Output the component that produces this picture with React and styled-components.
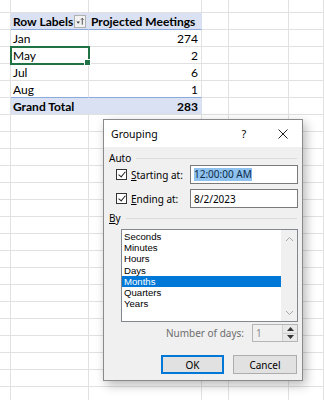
import React from "react";
import styled, { createGlobalStyle } from "styled-components";

const GlobalStyle = createGlobalStyle`
  html, body {
    margin: 0;
    padding: 0;
    background: #ffffff;
  }
  #root {
    width: 324px;
    height: 400px;
    overflow: hidden;
  }
`;

const COLS = "11px 78px 113px 27px 60px 1fr";
const GRID = "#e1e1e1";
const PIVOT = "#d9e1f2";
const PIVOT_LINE = "#8ea9db";

const rows = [
  { label: "Jan", value: "274" },
  { label: "May", value: "2", selected: true },
  { label: "Jul", value: "6" },
  { label: "Aug", value: "1" },
];

const listItems = ["Seconds", "Minutes", "Hours", "Days", "Months", "Quarters", "Years"];

const App = () => {
  const emptyRows = Array.from({ length: 17 });
  return (
    <>
      <GlobalStyle />
      <Page>
        <Sheet>
          <SheetRow $height={13}>
            <Cell /><Cell /><Cell /><Cell /><Cell /><Cell />
          </SheetRow>
          <SheetRow $height={17}>
            <Cell />
            <Cell $fill={PIVOT} $bottom={PIVOT_LINE} $bold>
              Row Labels
              <FilterButton>
                <svg width="11" height="11" viewBox="0 0 11 11">
                  <path d="M1.5 5.5 L5.5 5.5 L3.5 8 Z" fill="#444" />
                  <path d="M8 9 L8 2 M6.5 3.5 L8 2 L9.5 3.5" stroke="#444" strokeWidth="1" fill="none" />
                </svg>
              </FilterButton>
            </Cell>
            <Cell $fill={PIVOT} $bottom={PIVOT_LINE} $bold>Projected Meetings</Cell>
            <Cell /><Cell /><Cell />
          </SheetRow>
          {rows.map((r) => (
            <SheetRow key={r.label} $height={17}>
              <Cell />
              <Cell $selected={r.selected}>
                {r.label}
                {r.selected && <FillHandle />}
              </Cell>
              <Cell $right>{r.value}</Cell>
              <Cell /><Cell /><Cell />
            </SheetRow>
          ))}
          <SheetRow $height={17}>
            <Cell />
            <Cell $fill={PIVOT} $top={PIVOT_LINE} $bold>Grand Total</Cell>
            <Cell $fill={PIVOT} $top={PIVOT_LINE} $bold $right>283</Cell>
            <Cell /><Cell /><Cell />
          </SheetRow>
          {emptyRows.map((_, i) => (
            <SheetRow key={i} $height={17}>
              <Cell /><Cell /><Cell /><Cell /><Cell /><Cell />
            </SheetRow>
          ))}
        </Sheet>

        <Dialog>
          <TitleBar>
            <Title>Grouping</Title>
            <TitleButton $width={40}>?</TitleButton>
            <TitleButton $width={38}>
              <svg width="10" height="10" viewBox="0 0 10 10">
                <path d="M0.5 0.5 L9.5 9.5 M9.5 0.5 L0.5 9.5" stroke="#222" strokeWidth="1" />
              </svg>
            </TitleButton>
          </TitleBar>
          <Body>
            <GroupHeader>
              <span>Auto</span>
            </GroupHeader>
            <FieldRow $mt={1}>
              <CheckBox />
              <FieldLabel><u>S</u>tarting at:</FieldLabel>
              <TextInput>
                <Selected>12:00:00 AM</Selected>
              </TextInput>
            </FieldRow>
            <FieldRow $mt={5}>
              <CheckBox />
              <FieldLabel><u>E</u>nding at:</FieldLabel>
              <TextInput>8/2/2023</TextInput>
            </FieldRow>
            <GroupHeader $mt={4}>
              <span><u>B</u>y</span>
            </GroupHeader>
            <ListBox>
              <ListItems>
                {listItems.map((item) => (
                  <ListItem key={item} $active={item === "Months"}>{item}</ListItem>
                ))}
              </ListItems>
              <ScrollBar>
                <svg width="9" height="6" viewBox="0 0 9 6">
                  <path d="M1 5 L4.5 1.5 L8 5" stroke="#a6a6a6" strokeWidth="1" fill="none" />
                </svg>
                <svg width="9" height="6" viewBox="0 0 9 6">
                  <path d="M1 1 L4.5 4.5 L8 1" stroke="#a6a6a6" strokeWidth="1" fill="none" />
                </svg>
              </ScrollBar>
            </ListBox>
            <DaysRow>
              <DaysLabel>Number of days:</DaysLabel>
              <Spinner>
                <SpinValue>1</SpinValue>
                <SpinButtons>
                  <SpinButton>
                    <svg width="7" height="4" viewBox="0 0 7 4"><path d="M0 4 L3.5 0 L7 4 Z" fill="#333" /></svg>
                  </SpinButton>
                  <SpinButton>
                    <svg width="7" height="4" viewBox="0 0 7 4"><path d="M0 0 L3.5 4 L7 0 Z" fill="#333" /></svg>
                  </SpinButton>
                </SpinButtons>
              </Spinner>
            </DaysRow>
            <ButtonRow>
              <Button $primary>OK</Button>
              <Button>Cancel</Button>
            </ButtonRow>
          </Body>
        </Dialog>
      </Page>
    </>
  );
};

export default App;

const Page = styled.div`
  position: relative;
  width: 324px;
  height: 400px;
  overflow: hidden;
`;

const Sheet = styled.div`
  display: flex;
  flex-direction: column;
  font-family: Lato, "Liberation Sans", sans-serif;
  font-size: 12px;
  color: #000;
`;

const SheetRow = styled.div`
  display: grid;
  grid-template-columns: ${COLS};
  height: ${(p) => p.$height}px;
  flex: none;
`;

const Cell = styled.div`
  position: relative;
  box-sizing: border-box;
  display: flex;
  align-items: center;
  justify-content: ${(p) => (p.$right ? "flex-end" : "flex-start")};
  padding: 0 3px 0 2px;
  white-space: nowrap;
  background: ${(p) => p.$fill || "transparent"};
  border-right: 1px solid ${(p) => p.$fill || GRID};
  border-bottom: 1px solid ${(p) => p.$bottom || GRID};
  border-top: ${(p) => (p.$top ? `1px solid ${p.$top}` : "none")};
  margin-top: ${(p) => (p.$top ? "-1px" : "0")};
  font-weight: ${(p) => (p.$bold ? 700 : 400)};
  outline: ${(p) => (p.$selected ? "2px solid #217346" : "none")};
  outline-offset: -1px;
  z-index: ${(p) => (p.$selected ? 1 : 0)};
`;

const FilterButton = styled.span`
  margin-left: auto;
  margin-right: -1px;
  width: 12px;
  height: 13px;
  box-sizing: border-box;
  border: 1px solid #b0b0b0;
  background: #f2f2f2;
  display: flex;
  align-items: center;
  justify-content: center;
`;

const FillHandle = styled.span`
  position: absolute;
  right: -3px;
  bottom: -3px;
  width: 5px;
  height: 5px;
  background: #217346;
  border: 1px solid #fff;
  box-sizing: content-box;
`;

const Dialog = styled.div`
  position: absolute;
  left: 103px;
  top: 119px;
  width: 200px;
  height: 262px;
  box-sizing: border-box;
  border: 1px solid #8a8a8a;
  background: #f0f0f0;
  box-shadow: 3px 4px 10px rgba(0, 0, 0, 0.28);
  display: flex;
  flex-direction: column;
  font-family: "Noto Sans", "Open Sans", sans-serif;
  font-size: 10px;
  color: #000;
  z-index: 5;
`;

const TitleBar = styled.div`
  height: 27px;
  background: #ffffff;
  display: flex;
  align-items: center;
  padding-left: 7px;
`;

const Title = styled.div`
  flex: 1;
  font-size: 10.5px;
`;

const TitleButton = styled.div`
  width: ${(p) => p.$width}px;
  height: 27px;
  display: flex;
  align-items: center;
  justify-content: center;
  font-size: 11px;
`;

const Body = styled.div`
  flex: 1;
  display: flex;
  flex-direction: column;
  padding: 0 4px 0 5px;
`;

const GroupHeader = styled.div`
  height: 12px;
  margin-top: ${(p) => (p.$mt ?? 5)}px;
  display: flex;
  align-items: center;
  gap: 5px;
  padding-right: 1px;

  &::after {
    content: "";
    flex: 1;
    height: 1px;
    background: #dcdcdc;
  }
`;

const FieldRow = styled.div`
  display: flex;
  align-items: center;
  height: 19px;
  margin-top: ${(p) => p.$mt}px;
  padding-left: 7px;
`;

const CheckBox = styled.span`
  width: 11px;
  height: 11px;
  box-sizing: border-box;
  border: 1px solid #333;
  background: #fff;
  position: relative;
  flex: none;

  &::after {
    content: "";
    position: absolute;
    left: 3px;
    top: 0px;
    width: 3px;
    height: 6px;
    border: solid #222;
    border-width: 0 1px 1px 0;
    transform: rotate(40deg);
  }
`;

const FieldLabel = styled.span`
  width: 59px;
  margin-left: 4px;
  flex: none;
`;

const TextInput = styled.div`
  flex: 1;
  height: 19px;
  box-sizing: border-box;
  border: 1px solid #7a7a7a;
  background: #fff;
  display: flex;
  align-items: center;
  padding-left: 3px;
`;

const Selected = styled.span`
  background: #8fc2ee;
  color: #0b2a4a;
  line-height: 13px;
`;

const ListBox = styled.div`
  margin: 5px 0 0 12px;
  height: 93px;
  box-sizing: border-box;
  border: 1px solid #828790;
  background: #fff;
  display: flex;
`;

const ListItems = styled.div`
  flex: 1;
  padding-top: 1px;
`;

const ListItem = styled.div`
  height: 11.2px;
  line-height: 11.2px;
  font-family: "Liberation Sans", Arial, sans-serif;
  font-size: 9.6px;
  padding-left: 2px;
  overflow: hidden;
  background: ${(p) => (p.$active ? "#0078d7" : "transparent")};
  color: ${(p) => (p.$active ? "#fff" : "#000")};
`;

const ScrollBar = styled.div`
  width: 16px;
  background: #f0f0f0;
  display: flex;
  flex-direction: column;
  justify-content: space-between;
  align-items: center;
  padding: 6px 0 5px;
  box-sizing: border-box;
`;

const DaysRow = styled.div`
  display: flex;
  justify-content: flex-end;
  align-items: center;
  gap: 8px;
  margin-top: 2px;
  height: 18px;
`;

const DaysLabel = styled.span`
  color: #6d6d6d;
`;

const Spinner = styled.div`
  width: 46px;
  height: 18px;
  box-sizing: border-box;
  border: 1px solid #b5b5b5;
  background: #f0f0f0;
  display: flex;
`;

const SpinValue = styled.span`
  flex: 1;
  color: #8a8a8a;
  padding-left: 3px;
  display: flex;
  align-items: center;
`;

const SpinButtons = styled.div`
  width: 14px;
  display: flex;
  flex-direction: column;
  border-left: 1px solid #d0d0d0;
`;

const SpinButton = styled.div`
  flex: 1;
  display: flex;
  align-items: center;
  justify-content: center;
  background: #e8e8e8;

  & + & {
    border-top: 1px solid #d0d0d0;
  }
`;

const ButtonRow = styled.div`
  display: flex;
  justify-content: flex-end;
  gap: 9px;
  margin-top: 13px;
  padding-right: 1px;
`;

const Button = styled.div`
  width: ${(p) => (p.$primary ? 63 : 64)}px;
  height: 19px;
  box-sizing: border-box;
  border: ${(p) => (p.$primary ? "2px solid #0078d7" : "1px solid #adadad")};
  background: #e1e1e1;
  display: flex;
  align-items: center;
  justify-content: center;
`;
